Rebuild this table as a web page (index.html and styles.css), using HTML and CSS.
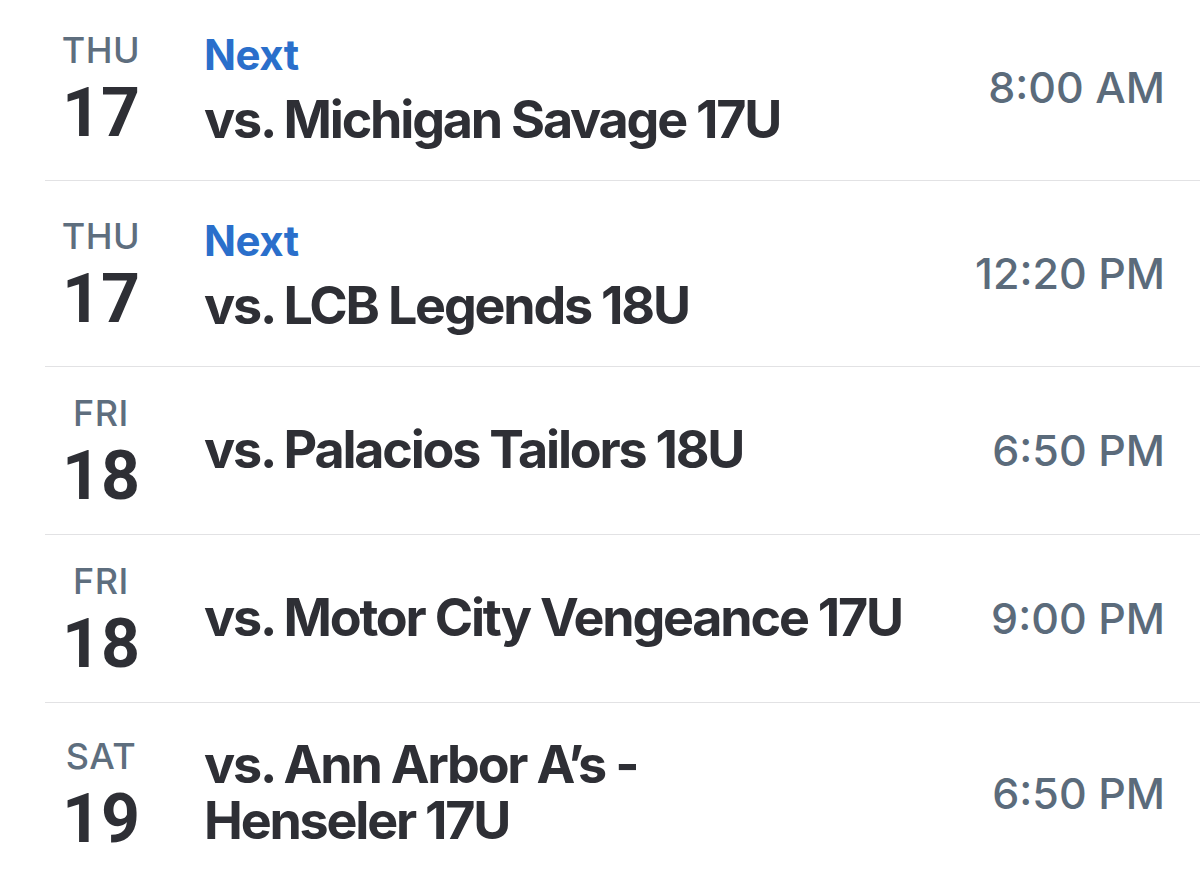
FILE: index.html
```html
<!DOCTYPE html>
<html lang="en">
<head>
<meta charset="utf-8">
<title>Schedule</title>
<link rel="stylesheet" href="styles.css">
</head>
<body>
<div class="list">
  <div class="row">
    <div class="date"><div class="dow">THU</div><div class="day">17</div></div>
    <div class="info has-next"><div class="next">Next</div><div class="title">vs. Michigan Savage 17U</div></div>
    <div class="time">8:00 AM</div>
  </div>
  <div class="row">
    <div class="date"><div class="dow">THU</div><div class="day">17</div></div>
    <div class="info has-next"><div class="next">Next</div><div class="title">vs. LCB Legends 18U</div></div>
    <div class="time">12:20 PM</div>
  </div>
  <div class="row">
    <div class="date"><div class="dow">FRI</div><div class="day">18</div></div>
    <div class="info"><div class="title">vs. Palacios Tailors 18U</div></div>
    <div class="time">6:50 PM</div>
  </div>
  <div class="row">
    <div class="date"><div class="dow">FRI</div><div class="day">18</div></div>
    <div class="info"><div class="title">vs. Motor City Vengeance 17U</div></div>
    <div class="time">9:00 PM</div>
  </div>
  <div class="row">
    <div class="date"><div class="dow">SAT</div><div class="day">19</div></div>
    <div class="info two-line"><div class="title">vs. Ann Arbor A’s -<br>Henseler 17U</div></div>
    <div class="time">6:50 PM</div>
  </div>
</div>
</body>
</html>
```

FILE: styles.css
```css
html, body {
  margin: 0;
  padding: 0;
  background: #ffffff;
  overflow: hidden;
}
body {
  font-family: Inter, "Noto Sans", sans-serif;
  color: #2e2f35;
  height: 883px;
}
.list {
  margin-top: -5px;
  margin-left: 45px;
}
.row {
  display: grid;
  grid-template-columns: 112px 1fr auto;
  column-gap: 47px;
  align-items: center;
  padding: 20px 35px 21px 0;
  border-bottom: 1px solid #e2e2e4;
}
.date {
  display: flex;
  flex-direction: column;
  align-items: center;
}
.dow {
  font-size: 36px;
  font-weight: 500;
  line-height: 53px;
  color: #5e6e7e;
  letter-spacing: 0.5px;
}
.day {
  font-family: Roboto, Inter, sans-serif;
  font-size: 68px;
  font-weight: 700;
  line-height: 73px;
  color: #2e2f35;
}
.info {
  display: flex;
  flex-direction: column;
}
.info.has-next {
  padding: 7px 0;
}
.info.two-line {
  padding: 14px 0;
}
.next {
  font-size: 42px;
  font-weight: 700;
  line-height: 66px;
  letter-spacing: -0.5px;
  color: #2a6fcb;
}
.title {
  font-size: 52px;
  font-weight: 700;
  line-height: 64px;
  letter-spacing: -2.2px;
  white-space: nowrap;
  color: #2e2f35;
}
.two-line .title {
  line-height: 56px;
}
.time {
  font-size: 43px;
  font-weight: 500;
  color: #5b6b7b;
  text-align: right;
}
```
